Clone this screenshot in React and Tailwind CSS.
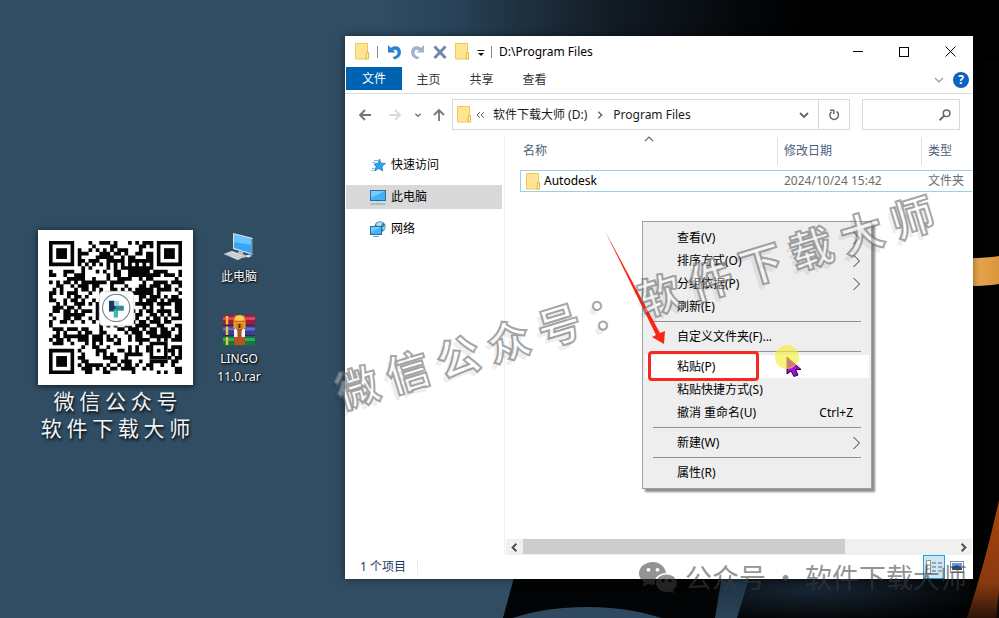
import React from "react";

const FONT = "font-['Noto_Sans','Noto_Sans_CJK_SC',sans-serif]";

function Wallpaper() {
  return (
    <svg className="absolute inset-0 h-full w-full" viewBox="0 0 999 618" preserveAspectRatio="none" aria-hidden="true">
      <defs>
        <linearGradient id="sky" x1="0" x2="1" y1="0" y2="0">
          <stop offset="0" stopColor="#304d63" />
          <stop offset="0.38" stopColor="#304d63" />
          <stop offset="0.45" stopColor="#29445a" />
          <stop offset="0.52" stopColor="#1f3140" />
          <stop offset="0.62" stopColor="#111a23" />
          <stop offset="0.76" stopColor="#030507" />
          <stop offset="0.82" stopColor="#000" />
        </linearGradient>
        <linearGradient id="strip" x1="0" x2="0" y1="0" y2="1">
          <stop offset="0" stopColor="#1d3243" />
          <stop offset="1" stopColor="#2b4357" />
        </linearGradient>
        <radialGradient id="glow" cx="0.3" cy="0.4" r="0.7">
          <stop offset="0" stopColor="#172635" />
          <stop offset="1" stopColor="#020304" />
        </radialGradient>
        <linearGradient id="amber" x1="0" x2="1" y1="0" y2="0">
          <stop offset="0" stopColor="#f0ad50" />
          <stop offset="1" stopColor="#d9943f" />
        </linearGradient>
        <linearGradient id="rust" x1="0" x2="0" y1="0" y2="1">
          <stop offset="0" stopColor="#a84408" />
          <stop offset="0.7" stopColor="#8a3a10" />
          <stop offset="1" stopColor="#2c140a" />
        </linearGradient>
      </defs>
      <rect width="999" height="618" fill="url(#sky)" />
      <rect y="300" width="560" height="318" fill="#304d63" />
      <path d="M516 570L503 618H999V570Z" fill="#030405" />
      <path d="M745 570L735 618H975L990 570Z" fill="url(#glow)" />
      <path d="M722 575L715 618H737L750 575Z" fill="url(#strip)" />
      <ellipse cx="587" cy="660" rx="122" ry="53" fill="#2f4a60" />
      <rect x="970" y="60" width="29" height="558" fill="#020202" />
      <path d="M970 258Q986 258 999 256V284Q986 286 970 286Z" fill="url(#amber)" />
      <path d="M999 500Q986 560 967 618H999Z" fill="url(#rust)" />
      <path d="M999 590L996 618H999Z" fill="#160a06" />
    </svg>
  );
}

function Folder() {
  return (
    <svg className="h-[17px] w-[14px] shrink-0" viewBox="0 0 14 17" aria-hidden="true">
      <path d="M0.500 0.500H12.500V10.500V16H0.500Z" fill="#ffe591" stroke="#ecc95c" />
      <path d="M11.500 9.500H13.500V16H11Z" fill="#fff0b5" stroke="#e3b83b" />
    </svg>
  );
}

const N = 37;

function inFinder(x, y) {
  return (x < 8 && y < 8) || (x > N - 9 && y < 8) || (x < 8 && y > N - 9);
}

function makeModules() {
  let path = "";
  let seed = 20241;
  for (let y = 0; y < N; y++) {
    for (let x = 0; x < N; x++) {
      seed = (seed * 1103515245 + 12345) % 2147483648;
      if (inFinder(x, y)) continue;
      if (x > 27 && x < 33 && y > 27 && y < 33) continue;
      let dark = (seed >> 16) % 100 < 51;
      if (x === 6 || y === 6) dark = (x + y) % 2 === 0;
      if (dark) path += `M${x} ${y}h1.03v1.03h-1.03z`;
    }
  }
  return path;
}

const MODULES = makeModules();

function Finder({ x, y }) {
  return (
    <g transform={`translate(${x} ${y})`}>
      <path d="M0 0H7V7H0ZM1 1V6H6V1Z" fillRule="evenodd" />
      <rect x="2" y="2" width="3" height="3" />
    </g>
  );
}

function QrCode() {
  return (
    <svg className="h-full w-full" viewBox="0 0 37 37" role="img" aria-label="微信公众号二维码">
      <g fill="#050505">
        <path d={MODULES} />
        <Finder x={0} y={0} />
        <Finder x={30} y={0} />
        <Finder x={0} y={30} />
        <path d="M28 28H33V33H28ZM29 29V32H32V29Z" fillRule="evenodd" />
        <rect x="30" y="30" width="1" height="1" />
      </g>
      <rect x="14" y="14" width="9.6" height="9.6" rx="1.2" fill="#fdfdfd" stroke="#d5d9dc" strokeWidth="0.2" />
      <circle cx="18.7" cy="18.6" r="3.8" fill="#fff" stroke="#6d8494" strokeWidth="0.3" />
      <path d="M16.700 16.600H18.200V18H18.600V19.600H16.700Z" fill="#173a63" />
      <path d="M18.200 16.700H19.500V18H18.200Z" fill="#9ed5d6" />
      <path d="M18 19H19.200V21.300H18Z" fill="#3fb9b5" />
      <path d="M18.600 18H20.800V19.400H18.600Z" fill="#2b8c96" />
    </svg>
  );
}

function PcIcon() {
  return (
    <svg className="h-8 w-8" viewBox="0 0 32 32" aria-hidden="true">
      <path d="M10 1L30 6V23L10 17Z" fill="#d7e6ee" />
      <path d="M11 2.5L28.5 7V21.5L11 16Z" fill="#37a6f4" />
      <path d="M11 2.5L28.5 7V13L11 10Z" fill="#69c3ff" />
      <path d="M28.5 7L30 6V23L28.5 21.5Z" fill="#5a7180" />
      <path d="M16 19L20 20V22L25 24L21 26L13 23Z" fill="#b9c3c9" />
      <path d="M1 22L9 19L22 24L15 28Z" fill="#dfe3e6" stroke="#9aa4ab" strokeWidth="0.6" />
      <path d="M4 22L17 26M7 21L19 25" stroke="#a4adb3" strokeWidth="0.7" />
      <path d="M22 24L26 22.500L29 24L25 25.500Z" fill="#e8ecee" />
    </svg>
  );
}

function RarIcon() {
  return (
    <svg className="h-[32px] w-[34px]" viewBox="0 0 34 32" aria-hidden="true">
      <rect x="1" y="1" width="32" height="10" rx="1" fill="#a51c38" />
      <rect x="1" y="3" width="32" height="3" fill="#d94662" />
      <rect x="1" y="11.500" width="32" height="10" rx="1" fill="#3d3d94" />
      <rect x="1" y="13.500" width="32" height="3" fill="#6a68bf" />
      <rect x="1" y="22" width="32" height="9.500" rx="1" fill="#137a3d" />
      <rect x="1" y="24" width="32" height="3" fill="#39a463" />
      <path d="M5 2V10.500M5 12.500V21M5 23V31" stroke="#f0c833" strokeWidth="2.400" />
      <path d="M1 11.200H33M1 21.700H33" stroke="#1c1c30" strokeWidth="0.700" />
      <rect x="12" y="1" width="11" height="30" fill="#a8521e" />
      <path d="M11.500 7Q12 1 17.500 1T23.500 7V14H11.500Z" fill="#eda52b" />
      <ellipse cx="17.500" cy="4" rx="4.500" ry="2.600" fill="#f8cf53" />
      <path d="M11.500 7.500H23.500" stroke="#b96a14" />
      <rect x="13.500" y="9" width="8" height="6" fill="#d98320" />
      <rect x="16.500" y="10" width="2" height="4" fill="#4a2708" />
      <path d="M12 23V16Q12 14 14 14.500L15.500 17V23ZM23 23V16Q23 14 21 14.500L19.500 17V23Z" fill="#f4f4f4" />
      <path d="M13 23H22V31H13Z" fill="#b9521c" />
    </svg>
  );
}

function DesktopItem({ icon, children }) {
  return (
    <button className="flex w-[64px] flex-col items-center gap-1 text-center text-[12px] leading-[18px] text-white [text-shadow:1px_1px_2px_#000,0_0_2px_#000]">
      {icon}
      <span>{children}</span>
    </button>
  );
}

function Chevron({ dir, className, w = 1.4 }) {
  const d = {
    down: "M2 4L6 8L10 4",
    up: "M2 8L6 4L10 8",
    right: "M4 2L8 6L4 10",
    left: "M8 2L4 6L8 10",
  }[dir];
  return (
    <svg className={className} viewBox="0 0 12 12" fill="none" stroke="currentColor" strokeWidth={w} aria-hidden="true">
      <path d={d} />
    </svg>
  );
}

function TitleBar() {
  return (
    <header className="flex h-[31px] items-center pl-[10px] text-[12px] text-black">
      <Folder />
      <span className="ml-2 h-3 w-px bg-[#8a8a8a]" />
      <div className="ml-[9px] flex items-center gap-2">
        <button aria-label="撤消">
          <svg className="h-4 w-[15px]" viewBox="0 0 15 16" aria-hidden="true">
            <path d="M1 1V8.500H8.500L6.200 6.300Q10.500 4.800 10.500 8.500T5.500 13L7.500 15.500Q14 13.500 14 8Q13.500 1.500 7 2.300L3.800 3.800Z" fill="#2b83cf" />
          </svg>
        </button>
        <button aria-label="恢复">
          <svg className="h-4 w-[15px]" viewBox="0 0 15 16" aria-hidden="true">
            <path d="M14 1V8.500H6.500L8.800 6.300Q4.500 4.800 4.500 8.500T9.500 13L7.500 15.500Q1 13.500 1 8Q1.500 1.500 8 2.300L11.200 3.800Z" fill="#a3b1cf" />
          </svg>
        </button>
        <button aria-label="删除">
          <svg className="h-4 w-[14px]" viewBox="0 0 14 16" aria-hidden="true">
            <path d="M1.500 2.500L12.500 14M12.500 2.500L1.500 14" stroke="#7187b0" strokeWidth="3" />
          </svg>
        </button>
        <button aria-label="新建文件夹"><Folder /></button>
        <button aria-label="自定义快速访问工具栏">
          <svg className="h-3 w-2" viewBox="0 0 8 12" aria-hidden="true">
            <path d="M0.500 4.500H7.500" stroke="#222" />
            <path d="M1 7H7L4 10Z" fill="#111" />
          </svg>
        </button>
      </div>
      <span className="ml-[6px] h-3 w-px bg-[#8a8a8a]" />
      <h1 className="ml-[7px] flex-1">D:\Program Files</h1>
      <div className="flex h-full items-center">
        <button className="flex h-full w-[46px] items-center justify-center" aria-label="最小化">
          <span className="h-px w-[10px] bg-black" />
        </button>
        <button className="flex h-full w-[46px] items-center justify-center" aria-label="最大化">
          <span className="h-[10px] w-[10px] border border-black" />
        </button>
        <button className="flex h-full w-[46px] items-center justify-center" aria-label="关闭">
          <svg className="h-[11px] w-[11px]" viewBox="0 0 11 11" stroke="#000" aria-hidden="true">
            <path d="M0.500 0.500L10.500 10.500M10.500 0.500L0.500 10.500" />
          </svg>
        </button>
      </div>
    </header>
  );
}

function Ribbon() {
  return (
    <nav className="flex h-[27px] items-start border-b border-[#dcdddf] pl-px text-[12px] text-[#333]">
      <button className="h-[23px] w-14 bg-[#0063b1] text-white">文件</button>
      {["主页", "共享", "查看"].map((t) => (
        <button key={t} className="h-[25px] w-[53px]">{t}</button>
      ))}
      <div className="ml-auto flex h-[26px] items-center gap-2 pr-1">
        <button className="text-[#999]" aria-label="展开功能区"><Chevron dir="down" className="h-3 w-3" w={1.2} /></button>
        <button className="flex h-4 w-4 items-center justify-center rounded-full bg-[#0a64bd] text-[12px] font-bold leading-4 text-white" aria-label="帮助">?</button>
      </div>
    </nav>
  );
}

function Arrow({ d, className }) {
  return (
    <svg className={className} viewBox="0 0 14 14" fill="none" stroke="currentColor" strokeWidth="1.800" aria-hidden="true">
      <path d={d} />
    </svg>
  );
}

function AddressRow() {
  return (
    <div className="flex h-[43px] items-start px-[13px] pt-[5px] text-[12px] text-[#1b1b1b]">
      <div className="flex h-8 w-[94px] items-center text-[#757575]">
        <button aria-label="后退"><Arrow className="h-[14px] w-[14px]" d="M13 7H2M7 2L2 7L7 12" /></button>
        <button className="ml-4 text-[#dadada]" aria-label="前进"><Arrow className="h-[14px] w-[14px]" d="M1 7H12M7 2L12 7L7 12" /></button>
        <button className="ml-3" aria-label="最近位置"><Chevron dir="down" className="h-2 w-2" w={2} /></button>
        <button className="ml-[10px]" aria-label="向上"><Arrow className="h-[14px] w-[14px]" d="M7 13V2M2 7L7 2L12 7" /></button>
      </div>
      <div className="flex h-[31px] flex-1 items-center border border-[#d9d9d9] pl-1">
        <Folder />
        <svg className="ml-[5px] h-2 w-[9px] text-[#666]" viewBox="0 0 9 8" fill="none" stroke="currentColor" aria-hidden="true">
          <path d="M4 1L1 4L4 7M8 1L5 4L8 7" />
        </svg>
        <button className="ml-2 whitespace-nowrap">软件下载大师 (D:)</button>
        <Chevron dir="right" className="mx-2 h-[10px] w-[10px] text-[#666]" w={1.8} />
        <button className="whitespace-nowrap">Program Files</button>
        <button className="ml-auto mr-2 text-[#666]" aria-label="以前的位置"><Chevron dir="down" className="h-3 w-3" w={1.8} /></button>
        <button className="flex h-full w-[31px] items-center justify-center border-l border-[#d9d9d9] text-[#666]" aria-label="刷新">
          <svg className="h-[12px] w-[12px]" viewBox="0 0 12 12" fill="none" stroke="currentColor" strokeWidth="1.500" aria-hidden="true">
            <path d="M8.500 2.500A4.300 4.300 0 1 1 3.500 2.800M2 1.200H5.800V5" />
          </svg>
        </button>
      </div>
      <label className="ml-3 flex h-[31px] w-[98px] items-center border border-[#d9d9d9] pr-2 text-[#666]">
        <input type="search" aria-label="搜索" className="w-0 flex-1 bg-transparent outline-none" />
        <svg className="h-3 w-3" viewBox="0 0 12 12" fill="none" stroke="currentColor" strokeWidth="1.500" aria-hidden="true">
          <circle cx="7.600" cy="4.200" r="3.300" />
          <path d="M5.200 6.600L0.600 11.200" strokeWidth="2" />
        </svg>
      </label>
    </div>
  );
}

function StarIcon() {
  return (
    <svg className="h-4 w-4" viewBox="0 0 16 16" aria-hidden="true">
      <path d="M9.500 2L10.800 6L15.500 6.500L12 9.300L12.500 14L8.800 11.500L4.500 14L6.200 9.800L4 7L8 6.300Z" fill="#2fa4ee" stroke="#1673bd" strokeWidth="0.700" />
      <path d="M4 3.500H8M2.500 5.500H5M2 11.500H4.500M1.500 13.500H3.500" stroke="#6cb9ea" />
    </svg>
  );
}

function MonitorIcon() {
  return (
    <svg className="h-4 w-4" viewBox="0 0 16 16" aria-hidden="true">
      <rect x="0.500" y="1.500" width="15" height="10" fill="#3fb2fb" stroke="#2a6f9e" />
      <path d="M1 2H15L1 9Z" fill="#78ccff" />
      <path d="M6 12H10V13.500H6Z" fill="#c3d2da" />
      <path d="M0.500 15H15.500" stroke="#7f9fb3" />
    </svg>
  );
}

function NetworkIcon() {
  return (
    <svg className="h-4 w-4" viewBox="0 0 16 16" aria-hidden="true">
      <circle cx="10" cy="5.800" r="5.600" fill="#3f87b5" />
      <path d="M6 3Q9 0 12.500 1.500L11 5L7 5ZM12 7L15.300 5L14 9Z" fill="#b5dde9" />
      <rect x="0.500" y="5.500" width="11" height="8" fill="#43b4fb" stroke="#2a6f9e" />
      <path d="M1 6H11L1 11Z" fill="#7accff" />
      <path d="M3 15.500H9" stroke="#7f9fb3" />
    </svg>
  );
}

function Sidebar() {
  const items = [
    ["快速访问", <StarIcon />, false],
    ["此电脑", <MonitorIcon />, true],
    ["网络", <NetworkIcon />, false],
  ];
  return (
    <nav className="flex w-[160px] shrink-0 flex-col gap-2 border-r border-[#f0f0f0] pl-px pr-[2px] pt-4 text-[12px] text-black">
      {items.map(([label, icon, on]) => (
        <button key={label} className={on ? "flex h-6 items-center gap-[5px] bg-[#d9d9d9] pl-6" : "flex h-6 items-center gap-[5px] pl-6"}>
          {icon}
          <span>{label}</span>
        </button>
      ))}
    </nav>
  );
}

function Files() {
  return (
    <table className="ml-[15px] w-[calc(100%-16px)] table-fixed border-separate border-spacing-0 text-left text-[12px]">
      <colgroup>
        <col />
        <col className="w-[144px]" />
        <col className="w-[51px]" />
      </colgroup>
      <thead className="text-[#4c607a]">
        <tr className="h-[33px] align-top">
          <th className="relative font-normal">
            <div className="h-7 pl-[3px] leading-7">名称</div>
            <Chevron dir="up" className="absolute left-1/2 top-[-4px] h-3 w-3 -translate-x-1/2 text-[#666]" w={1.1} />
          </th>
          <th className="font-normal"><div className="h-7 border-l border-[#e0e0e0] pl-[6px] leading-7">修改日期</div></th>
          <th className="font-normal"><div className="h-7 border-l border-[#e0e0e0] pl-[6px] leading-7">类型</div></th>
        </tr>
      </thead>
      <tbody>
        <tr className="h-[22px] text-[#6d6d6d]">
          <td className="border-y border-l border-[#9ccfe9] pl-[5px] text-black">
            <div className="flex h-5 items-center gap-1"><Folder /><span>Autodesk</span></div>
          </td>
          <td className="whitespace-nowrap border-y border-[#9ccfe9] pl-[7px]">2024/10/24 15:42</td>
          <td className="whitespace-nowrap border-y border-[#9ccfe9] pl-[7px]">文件夹</td>
        </tr>
      </tbody>
    </table>
  );
}

function ScrollBar() {
  return (
    <div className="ml-px mr-px mt-auto flex h-4 bg-[#f0f0f0] text-[#505050]">
      <button className="flex w-[17px] items-center justify-center" aria-label="向左滚动"><Chevron dir="left" className="h-[11px] w-[11px]" w={2.2} /></button>
      <div className="flex-1"><div className="h-[15px] w-[74.5%] bg-[#cdcdcd]" /></div>
      <button className="flex w-[17px] items-center justify-center" aria-label="向右滚动"><Chevron dir="right" className="h-[11px] w-[11px]" w={2.2} /></button>
    </div>
  );
}

function StatusBar() {
  return (
    <footer className="flex h-6 items-center pl-[15px] pr-2 text-[12px] text-[#1e395b]">
      <span>1 个项目</span>
      <span className="ml-[11px] h-4 w-px bg-[#ececec]" />
      <div className="ml-auto flex items-center gap-1">
        <button className="flex h-6 w-[22px] items-center justify-center border border-[#26a0da] bg-[#cce8f6]" aria-label="详细信息">
          <svg className="h-[14px] w-4" viewBox="0 0 16 14" fill="none" aria-hidden="true">
            <path d="M0.500 0.500H4.500V13.500H0.500ZM0.500 5H4.500M0.500 9H4.500" stroke="#8d8d8d" fill="#fff" />
            <path d="M6 3H10M12 3H16M6 7H10M12 7H16M6 11H10M12 11H16" stroke="#5f6a72" />
          </svg>
        </button>
        <button className="flex w-[16px] justify-center" aria-label="大缩略图">
          <svg className="h-3 w-[14px]" viewBox="0 0 14 12" aria-hidden="true">
            <rect x="0.500" y="0.500" width="13" height="11" fill="#fff" stroke="#8d8d8d" />
            <rect x="2" y="2" width="10" height="4" fill="#5f9df0" />
            <path d="M2 6L7 4L12 7V9H2Z" fill="#2b5275" />
          </svg>
        </button>
      </div>
    </footer>
  );
}

function Explorer() {
  return (
    <main className="absolute bottom-[39px] left-[345px] right-[26px] top-9 flex flex-col bg-white shadow-[0_0_8px_rgba(0,0,0,0.5)]">
      <TitleBar />
      <Ribbon />
      <AddressRow />
      <div className="flex min-h-0 flex-1">
        <Sidebar />
        <section className="flex min-w-0 flex-1 flex-col">
          <Files />
          <ScrollBar />
        </section>
      </div>
      <StatusBar />
    </main>
  );
}

const MENU = [
  ["查看(V)", "sub"],
  ["排序方式(O)", "sub"],
  ["分组依据(P)", "sub"],
  ["刷新(E)"],
  null,
  ["自定义文件夹(F)..."],
  null,
  ["粘贴(P)", "active"],
  ["粘贴快捷方式(S)"],
  ["撤消 重命名(U)", "key", "Ctrl+Z"],
  null,
  ["新建(W)", "sub"],
  null,
  ["属性(R)"],
];

function MenuRow({ item }) {
  if (!item) return <div className="mx-[8px] flex h-[7px] items-center"><div className="h-px w-full bg-[#919191]" /></div>;
  const [label, kind, key] = item;
  return (
    <button className={kind === "active" ? "flex h-[23px] items-center bg-white pl-8 pr-2" : "flex h-[23px] items-center pl-8 pr-2"}>
      <span>{label}</span>
      {kind === "sub" && (
        <svg className="ml-auto h-[14px] w-2" viewBox="0 0 8 14" fill="none" stroke="#333" aria-hidden="true">
          <path d="M0.500 1L6.500 7L0.500 13" />
        </svg>
      )}
      {kind === "key" && <span className="ml-auto pr-2">{key}</span>}
    </button>
  );
}

function ContextMenu() {
  return (
    <div className="absolute left-[642px] top-[221px] flex w-[230px] flex-col border border-[#a0a0a0] bg-[#eeeeee] px-[2px] py-1 text-[12px] text-black shadow-[3px_3px_2px_rgba(0,0,0,0.45)]">
      {MENU.map((item, i) => <MenuRow key={i} item={item} />)}
    </div>
  );
}

function Annotations() {
  return (
    <>
      <div className="pointer-events-none absolute left-[648px] top-[351px] h-[30px] w-[111px] rounded-[4px] border-[3px] border-[#f5291d]" />
      <svg className="pointer-events-none absolute left-[600px] top-[226px] h-[160px] w-[210px]" viewBox="600 226 210 160" aria-hidden="true">
        <path d="M605 231L660 333L665 331L664 344L652 337L656 335Z" fill="#fb2314" />
        <path d="M787 357V374L791 371L794 376.500L798 375L795.500 369.500H801Z" fill="#a010e0" stroke="#220033" />
        <circle cx="787" cy="357" r="12" fill="#f5ee3c" fillOpacity="0.650" />
        <path d="M787.500 358L788 368L795 365Z" fill="#d9737a" />
      </svg>
    </>
  );
}

function Watermarks() {
  return (
    <>
      <p className="pointer-events-none absolute left-[634px] top-[300px] -translate-x-1/2 -translate-y-1/2 -rotate-[17deg] whitespace-nowrap font-['Noto_Sans_CJK_SC',sans-serif] text-[43px] font-bold leading-[60px] text-white/40 [-webkit-text-stroke:2px_rgba(90,90,90,0.55)] [text-shadow:-5px_4px_0_rgba(0,0,0,0.07)]">
        微 信 公 众 号 ： 软 件 下 载 大 师
      </p>
      <div className="pointer-events-none absolute bottom-[25px] right-8 flex items-center gap-2 text-[#3c3c3c] opacity-55">
        <svg className="h-8 w-[38px]" viewBox="0 0 38 32" fill="currentColor" aria-hidden="true">
          <path fillRule="evenodd" d="M14 1C6 1 0 6 0 12.500C0 16 2 19 5 21L4 25.500L9 23Q12 24 16 23.800C14.500 17 20 12 27 12C26 5 20 1 14 1ZM9.500 7A1.900 1.900 0 1 1 9.490 7ZM18.500 7A1.900 1.900 0 1 1 18.490 7Z" />
          <path fillRule="evenodd" d="M27.500 13.500C21.500 13.500 17 17.500 17 22.300C17 27 21.500 31 27.500 31Q29.500 31 31 30.400L35 32L34 28.800Q38 26 38 22.300C38 17.500 33.500 13.500 27.500 13.500ZM24 18A1.600 1.600 0 1 1 23.990 18ZM31 18A1.600 1.600 0 1 1 30.990 18Z" />
        </svg>
        <p className="whitespace-nowrap font-['Noto_Sans_CJK_SC',sans-serif] text-[27px] leading-8">公众号 · 软件下载大师</p>
      </div>
    </>
  );
}

export default function App() {
  return (
    <div className={`relative min-h-screen overflow-hidden bg-[#304d63] ${FONT}`}>
      <Wallpaper />
      <figure className="absolute left-[38px] top-[230px] w-[155px]">
        <div className="h-[155px] bg-white p-[11px] shadow-[0_1px_6px_rgba(0,0,0,0.7)]"><QrCode /></div>
        <figcaption className="mt-[2px] flex flex-col items-center whitespace-nowrap font-['Noto_Sans_CJK_SC',sans-serif] text-[21px] leading-[27px] text-[#f2f4f5] [text-shadow:1px_2px_3px_#000]">
          <span>微 信 公 众 号</span>
          <span>软 件 下 载 大 师</span>
        </figcaption>
      </figure>
      <div className="absolute left-[207px] top-[232px] flex flex-col gap-7">
        <DesktopItem icon={<PcIcon />}>此电脑</DesktopItem>
        <DesktopItem icon={<RarIcon />}>LINGO<br />11.0.rar</DesktopItem>
      </div>
      <Explorer />
      <ContextMenu />
      <Annotations />
      <Watermarks />
    </div>
  );
}
